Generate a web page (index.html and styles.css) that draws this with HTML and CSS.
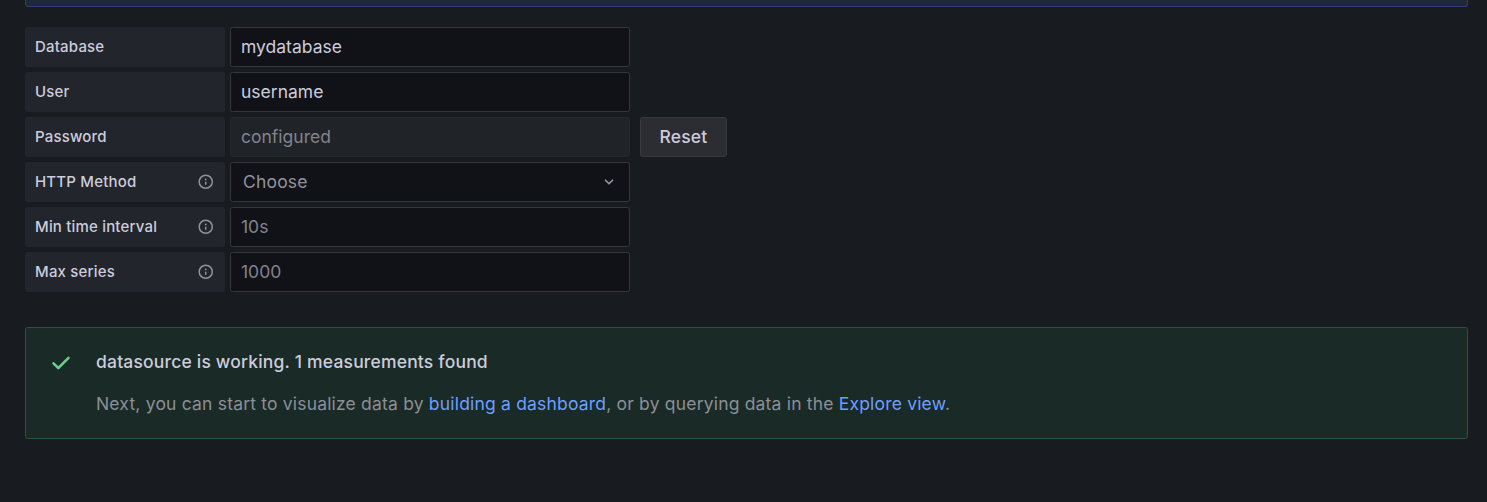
FILE: index.html
```html
<!DOCTYPE html>
<html lang="en">
<head>
<meta charset="utf-8">
<title>Data source settings</title>
<link rel="stylesheet" href="styles.css">
</head>
<body>
<svg class="sprite" aria-hidden="true">
  <symbol id="info" viewBox="0 0 24 24"><path d="M12,2A10,10,0,1,0,22,12,10,10,0,0,0,12,2Zm0,18a8,8,0,1,1,8-8A8,8,0,0,1,12,20Zm0-8.5a1,1,0,0,0-1,1v3a1,1,0,0,0,2,0v-3A1,1,0,0,0,12,11.5Zm0-4a1.25,1.25,0,1,0,1.25,1.25A1.25,1.25,0,0,0,12,7.5Z"/></symbol>
  <symbol id="angle-down" viewBox="0 0 24 24"><path d="M17,9.17a1,1,0,0,0-1.41,0L12,12.71,8.46,9.17a1,1,0,0,0-1.41,0,1,1,0,0,0,0,1.42l4.24,4.24a1,1,0,0,0,1.42,0L17,10.59A1,1,0,0,0,17,9.17Z"/></symbol>
  <symbol id="check" viewBox="0 0 24 24"><path d="M18.71,7.21a1,1,0,0,0-1.42,0L9.84,14.67,6.71,11.53A1,1,0,1,0,5.29,13l3.84,3.84a1,1,0,0,0,1.42,0l8.16-8.16A1,1,0,0,0,18.71,7.21Z"/></symbol>
</svg>
<main class="page">
  <div class="info-box"></div>
  <form class="settings">
    <div class="row"><label class="label" for="database">Database</label><input class="input" id="database" value="mydatabase"></div>
    <div class="row"><label class="label" for="user">User</label><input class="input" id="user" value="username"></div>
    <div class="row"><label class="label" for="password">Password</label><input class="input disabled" id="password" value="configured" disabled><button class="reset" type="button">Reset</button></div>
    <div class="row"><span class="label">HTTP Method<svg class="info"><use href="#info"/></svg></span><div class="input select"><span>Choose</span><svg class="arrow"><use href="#angle-down"/></svg></div></div>
    <div class="row"><label class="label" for="interval">Min time interval<svg class="info"><use href="#info"/></svg></label><input class="input" id="interval" placeholder="10s"></div>
    <div class="row"><label class="label" for="series">Max series<svg class="info"><use href="#info"/></svg></label><input class="input" id="series" placeholder="1000"></div>
  </form>
  <section class="alert">
    <svg class="check"><use href="#check"/></svg>
    <div class="alert-body">
      <div class="alert-title">datasource is working. 1 measurements found</div>
      <div class="alert-text">Next, you can start to visualize data by <a href="#">building a dashboard</a>, or by querying data in the <a href="#">Explore view</a>.</div>
    </div>
  </section>
</main>
</body>
</html>
```
FILE: styles.css
```css
* { box-sizing: border-box; }
body {
  margin: 0;
  background: #181b1f;
  color: #ccccdc;
  font: 400 17.5px/27.5px Inter, "Liberation Sans", sans-serif;
  letter-spacing: 0.01071em;
}
.sprite { display: none; }
svg { fill: currentColor; flex: none; }
.page { height: 502px; overflow: hidden; padding: 0 19px 0 25px; }
.info-box {
  height: 7px;
  background: #1e283a;
  border: 1px solid #2d4273;
  border-top: 0;
  border-radius: 0 0 3px 3px;
}
.settings { display: flex; flex-direction: column; gap: 5px; margin-top: 20px; }
.row { display: flex; height: 40px; }
.label {
  display: flex;
  align-items: center;
  justify-content: space-between;
  width: 200px;
  margin-right: 5px;
  padding: 0 10px;
  background: #22252b;
  border-radius: 2.5px;
  font-size: 15px;
  font-weight: 500;
  letter-spacing: 0.0125em;
}
.info { width: 17.5px; height: 17.5px; margin-right: 0.5px; color: #91929e; }
.input {
  width: 400px;
  height: 40px;
  padding: 0 10px 2px;
  background: #111217;
  border: 1px solid #36373d;
  border-radius: 2.5px;
  color: #ccccdc;
  font: inherit;
  letter-spacing: 0;
  outline: 0;
}
.input::placeholder { color: #82838e; opacity: 1; }
.disabled { background: #202327; border-color: #25282c; color: #82838e; }
.select {
  display: flex;
  align-items: center;
  justify-content: space-between;
  padding: 0 10px 0 12px;
  color: #91929e;
  letter-spacing: 0.01071em;
}
.arrow { width: 20px; height: 20px; }
.reset {
  width: 87px;
  height: 40px;
  margin-left: 10px;
  padding: 0;
  background: #2c2d32;
  border: 1px solid #38393e;
  border-radius: 2.5px;
  color: #ccccdc;
  font: inherit;
  font-weight: 500;
  letter-spacing: inherit;
}
.alert {
  display: flex;
  height: 112px;
  margin-top: 35px;
  padding: 20px 25px;
  background: #1a2a27;
  border: 1px solid #2b513f;
  border-radius: 2.5px;
}
.check { width: 30px; height: 30px; margin: 0 20px 0 -5px; color: #6ccf8e; }
.alert-title { font-weight: 500; }
.alert-text { margin-top: 14px; color: #8b8f96; }
.alert-text a { color: #6e9fff; text-decoration: none; }
```
